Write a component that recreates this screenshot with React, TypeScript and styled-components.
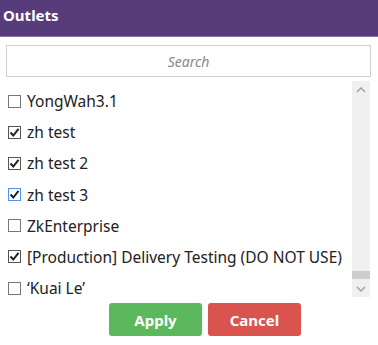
import { createGlobalStyle } from 'styled-components'
import styled from 'styled-components'

const outlets = [
  { name: 'YongWah3.1', checked: false },
  { name: 'zh test', checked: true },
  { name: 'zh test 2', checked: true },
  { name: 'zh test 3', checked: true, focused: true },
  { name: 'ZkEnterprise', checked: false },
  { name: '[Production] Delivery Testing (DO NOT USE)', checked: true },
  { name: '\u2018Kuai Le\u2019', checked: false },
]

export default function App() {
  return (
    <>
      <GlobalStyle />
      <Panel>
        <Header>Outlets</Header>
        <SearchWrap>
          <SearchInput placeholder='Search' />
        </SearchWrap>
        <ListBox>
          <Items>
            {outlets.map((o) => (
              <Row key={o.name}>
                <Box checked={o.checked} focused={!!o.focused}>
                  {o.checked && (
                    <svg width='11' height='11' viewBox='0 0 11 11'>
                      <path d='M1.5 5.5 L4.3 8.5 L9.5 1.8' fill='none' stroke='#222' strokeWidth='2' />
                    </svg>
                  )}
                </Box>
                <Label>{o.name}</Label>
              </Row>
            ))}
          </Items>
          <ScrollBar>
            <Arrow>
              <svg width='10' height='6' viewBox='0 0 10 6'>
                <path d='M1 5 L5 1 L9 5' fill='none' stroke='#a3a3a3' strokeWidth='1.5' />
              </svg>
            </Arrow>
            <Track />
            <Thumb />
            <Arrow>
              <svg width='10' height='6' viewBox='0 0 10 6'>
                <path d='M1 1 L5 5 L9 1' fill='none' stroke='#a3a3a3' strokeWidth='1.5' />
              </svg>
            </Arrow>
          </ScrollBar>
        </ListBox>
        <Actions>
          <Button kind='apply'>Apply</Button>
          <Button kind='cancel'>Cancel</Button>
        </Actions>
      </Panel>
    </>
  )
}

const GlobalStyle = createGlobalStyle`
  body {
    margin: 0;
    background: #fff;
    font-family: 'Noto Sans', 'Open Sans', sans-serif;
  }
`

const Panel = styled.div`
  width: 378px;
  height: 345px;
  display: flex;
  flex-direction: column;
`

const Header = styled.div`
  height: 37px;
  background: #573c7b;
  border-bottom: 1px solid #8a74a8;
  box-sizing: border-box;
  color: #fff;
  font-weight: 700;
  font-size: 15px;
  padding: 5px 0 0 3px;
`

const SearchWrap = styled.div`
  padding: 8px 7px 0 6px;
`

const SearchInput = styled.input`
  width: 100%;
  height: 32px;
  box-sizing: border-box;
  border: 1px solid #cfcfcf;
  font-family: inherit;
  font-size: 14px;
  text-align: center;
  outline: none;
  &::placeholder {
    color: #888;
    font-style: italic;
  }
`

const ListBox = styled.div`
  display: flex;
  height: 216px;
  margin: 4px 8px 0 6px;
`

const Items = styled.div`
  flex: 1;
  display: flex;
  flex-direction: column;
  gap: 9.2px;
  padding-top: 9px;
`

const Row = styled.div`
  display: flex;
  align-items: center;
  height: 22px;
`

const Box = styled.span<{ checked: boolean; focused: boolean }>`
  width: 13px;
  height: 13px;
  box-sizing: border-box;
  margin: 0 6px 0 2px;
  border: 1px solid ${(p) => (p.focused ? '#4d90fe' : p.checked ? '#555' : '#777')};
  display: flex;
  align-items: center;
  justify-content: center;
  background: #fff;
`

const Label = styled.span`
  font-size: 15.5px;
  color: #222;
  white-space: nowrap;
`

const ScrollBar = styled.div`
  width: 18px;
  background: #f0f0f0;
  display: flex;
  flex-direction: column;
`

const Arrow = styled.div`
  height: 17px;
  display: flex;
  align-items: center;
  justify-content: center;
`

const Track = styled.div`
  flex: 1;
`

const Thumb = styled.div`
  height: 8px;
  background: #cdcdcd;
  margin-bottom: 1px;
`

const Actions = styled.div`
  display: flex;
  gap: 6px;
  padding: 6px 0 0 109px;
`

const Button = styled.button<{ kind: 'apply' | 'cancel' }>`
  width: 93px;
  height: 33px;
  border: none;
  border-radius: 3px;
  color: #fff;
  font-family: inherit;
  font-weight: 700;
  font-size: 15px;
  background: ${(p) => (p.kind === 'apply' ? '#5cb85c' : '#d9534f')};
`
